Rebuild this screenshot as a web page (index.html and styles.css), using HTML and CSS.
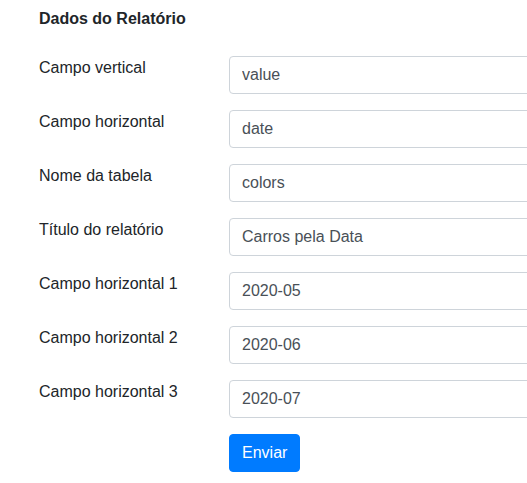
FILE: index.html
```html
<!DOCTYPE html>
<html lang="pt">
<head>
<meta charset="utf-8">
<title>Dados do Relatório</title>
<link rel="stylesheet" href="styles.css">
</head>
<body>
<div class="page">
  <h5 class="title">Dados do Relatório</h5>
  <form class="form">
    <div class="row"><label class="label">Campo vertical</label><input class="input" type="text" value="value"></div>
    <div class="row"><label class="label">Campo horizontal</label><input class="input" type="text" value="date"></div>
    <div class="row"><label class="label">Nome da tabela</label><input class="input" type="text" value="colors"></div>
    <div class="row"><label class="label">Título do relatório</label><input class="input" type="text" value="Carros pela Data"></div>
    <div class="row"><label class="label">Campo horizontal 1</label><input class="input" type="text" value="2020-05"></div>
    <div class="row"><label class="label">Campo horizontal 2</label><input class="input" type="text" value="2020-06"></div>
    <div class="row"><label class="label">Campo horizontal 3</label><input class="input" type="text" value="2020-07"></div>
    <div class="row"><span class="label"></span><button class="btn" type="button">Enviar</button></div>
  </form>
</div>
</body>
</html>
```
FILE: styles.css
```css
html, body {
  margin: 0;
  padding: 0;
  overflow: hidden;
  background: #fff;
}
body {
  font-family: "Liberation Sans", Arial, sans-serif;
  font-size: 16px;
  line-height: 1.5;
  color: #212529;
}
.page {
  padding: 7px 0 0 39px;
  width: 800px;
}
.title {
  margin: 0 0 25px;
  font-size: 16px;
  font-weight: bold;
  line-height: 24px;
}
.form {
  display: flex;
  flex-direction: column;
  gap: 16px;
}
.row {
  display: flex;
  align-items: flex-start;
}
.label {
  width: 190px;
  flex: none;
  line-height: 24px;
}
.input {
  width: 400px;
  height: 38px;
  box-sizing: border-box;
  padding: 6px 12px;
  border: 1px solid #ced4da;
  border-radius: 4px;
  font-family: inherit;
  font-size: 16px;
  line-height: 24px;
  color: #495057;
  background: #fff;
}
.btn {
  height: 38px;
  padding: 6px 12px;
  border: 1px solid #007bff;
  border-radius: 4px;
  background: #007bff;
  color: #fff;
  font-family: inherit;
  font-size: 16px;
  line-height: 24px;
}
```
